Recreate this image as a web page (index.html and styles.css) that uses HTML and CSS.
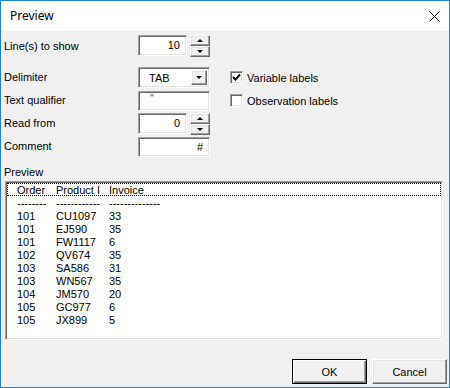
FILE: index.html
```html
<!DOCTYPE html>
<html lang="en">
<head>
    <meta charset="UTF-8">
    <title>Preview</title>
    <link rel="stylesheet" href="styles.css">
</head>
<body>
    <div class="window">
        <div class="titlebar">
            <span class="title">Preview</span>
            <svg class="close" width="11" height="11" viewBox="0 0 11 11">
                <path d="M0.5 0.5 L10.5 10.5 M10.5 0.5 L0.5 10.5" stroke="#000" stroke-width="1" fill="none"/>
            </svg>
        </div>
        <div class="content">
            <div class="field-row top-row">
                <span class="label">Line(s) to show</span>
                <div class="spin">
                    <div class="edit num">10</div>
                    <div class="spin-btns">
                        <span class="spin-btn"><i class="arrow-up"></i></span>
                        <span class="spin-btn"><i class="arrow-down"></i></span>
                    </div>
                </div>
            </div>

            <div class="fields">
                <div class="field-row">
                    <span class="label">Delimiter</span>
                    <div class="combo">
                        <span class="combo-text">TAB</span>
                        <span class="combo-btn"><i class="arrow-down"></i></span>
                    </div>
                    <label class="check">
                        <span class="box">
                            <svg width="11" height="11" viewBox="0 0 11 11"><path d="M2 5 L4.5 7.5 L9 2.5" stroke="#000" stroke-width="2" fill="none"/></svg>
                        </span>
                        Variable labels
                    </label>
                </div>
                <div class="field-row">
                    <span class="label">Text qualifier</span>
                    <div class="edit wide"><span class="quote">"</span></div>
                    <label class="check">
                        <span class="box"></span>
                        Observation labels
                    </label>
                </div>
                <div class="field-row">
                    <span class="label">Read from</span>
                    <div class="spin">
                        <div class="edit num">0</div>
                        <div class="spin-btns">
                            <span class="spin-btn"><i class="arrow-up"></i></span>
                            <span class="spin-btn"><i class="arrow-down"></i></span>
                        </div>
                    </div>
                </div>
                <div class="field-row">
                    <span class="label">Comment</span>
                    <div class="edit wide num">#</div>
                </div>
            </div>

            <div class="section-label">Preview</div>
            <div class="listbox">
                <div class="list-row header"><span>Order</span><span>Product I</span><span>Invoice</span></div>
                <div class="list-row"><span>--------</span><span>------------</span><span>--------------</span></div>
                <div class="list-row"><span>101</span><span>CU1097</span><span>33</span></div>
                <div class="list-row"><span>101</span><span>EJ590</span><span>35</span></div>
                <div class="list-row"><span>101</span><span>FW1117</span><span>6</span></div>
                <div class="list-row"><span>102</span><span>QV674</span><span>35</span></div>
                <div class="list-row"><span>103</span><span>SA586</span><span>31</span></div>
                <div class="list-row"><span>103</span><span>WN567</span><span>35</span></div>
                <div class="list-row"><span>104</span><span>JM570</span><span>20</span></div>
                <div class="list-row"><span>105</span><span>GC977</span><span>6</span></div>
                <div class="list-row"><span>105</span><span>JX899</span><span>5</span></div>
            </div>

            <div class="buttons">
                <button class="btn default">OK</button>
                <button class="btn">Cancel</button>
            </div>
        </div>
    </div>
</body>
</html>
```

FILE: styles.css
```css
body {
    margin: 0;
    font-family: "Liberation Sans", Arial, sans-serif;
    font-size: 11px;
    color: #000;
    background: #fff;
}
.window {
    width: 450px;
    height: 388px;
    box-sizing: border-box;
    border: 1px solid #1883d7;
    display: flex;
    flex-direction: column;
}
.titlebar {
    height: 30px;
    background: #fff;
    display: flex;
    align-items: center;
    justify-content: space-between;
    padding: 0 9px 0 9px;
}
.title {
    font-family: "Noto Sans", "Liberation Sans", sans-serif;
    font-size: 12px;
    margin-top: -1px;
}
.close {
    display: block;
}
.content {
    flex: 1;
    background: #f0f0f0;
    padding: 0 2px 0 3px;
}

/* form rows */
.field-row {
    display: grid;
    grid-template-columns: 134px 92px auto;
    align-items: center;
    height: 23px;
}
.top-row {
    margin-top: 3px;
    height: 24px;
}
.fields {
    margin-top: 8px;
}
.label {
    line-height: 13px;
}

/* sunken edit box */
.edit {
    box-sizing: border-box;
    height: 21px;
    width: 49px;
    background: #fff;
    border: 1px solid;
    border-color: #a0a0a0 #fff #fff #a0a0a0;
    box-shadow: inset 1px 1px #696969, inset -1px -1px #e3e3e3;
    padding: 0 6px;
    line-height: 19px;
}
.edit.wide {
    width: 72px;
    height: 20px;
    line-height: 18px;
}
.edit.num {
    text-align: right;
}
.quote {
    color: #1060c8;
    margin-left: 5px;
    font-size: 10px;
    vertical-align: top;
    line-height: 14px;
}

.spin {
    display: flex;
    gap: 3px;
}
.spin-btns {
    display: flex;
    flex-direction: column;
    width: 20px;
}
.spin-btn {
    box-sizing: border-box;
    height: 11px;
    background: #f0f0f0;
    border: 1px solid;
    border-color: #fff #696969 #696969 #fff;
    box-shadow: inset -1px -1px #a0a0a0, inset 1px 1px #e3e3e3;
    display: flex;
    align-items: center;
    justify-content: center;
}
.arrow-up {
    width: 0;
    height: 0;
    border-left: 3px solid transparent;
    border-right: 3px solid transparent;
    border-bottom: 3px solid #000;
}
.arrow-down {
    width: 0;
    height: 0;
    border-left: 3px solid transparent;
    border-right: 3px solid transparent;
    border-top: 3px solid #000;
}

.combo {
    box-sizing: border-box;
    width: 72px;
    height: 21px;
    background: #fff;
    border: 1px solid;
    border-color: #a0a0a0 #fff #fff #a0a0a0;
    box-shadow: inset 1px 1px #696969, inset -1px -1px #e3e3e3;
    display: flex;
    align-items: center;
    justify-content: space-between;
    padding: 2px 2px 2px 10px;
}
.combo-btn {
    box-sizing: border-box;
    width: 16px;
    height: 15px;
    background: #f0f0f0;
    border: 1px solid;
    border-color: #fff #696969 #696969 #fff;
    box-shadow: inset -1px -1px #a0a0a0, inset 1px 1px #e3e3e3;
    display: flex;
    align-items: center;
    justify-content: center;
}

.check {
    display: flex;
    align-items: center;
    gap: 4px;
}
.box {
    box-sizing: border-box;
    width: 13px;
    height: 13px;
    background: #fff;
    border: 1px solid;
    border-color: #a0a0a0 #fff #fff #a0a0a0;
    box-shadow: inset 1px 1px #696969, inset -1px -1px #e3e3e3;
    display: flex;
    align-items: center;
    justify-content: center;
}
.box svg {
    display: block;
}

/* preview list */
.section-label {
    margin-top: 8px;
    line-height: 13px;
}
.listbox {
    box-sizing: border-box;
    margin: 2px 4px 0 1px;
    height: 159px;
    background: #fff;
    border: 1px solid;
    border-color: #a0a0a0 #fff #fff #a0a0a0;
    box-shadow: inset 1px 1px #696969, inset -1px -1px #e3e3e3;
    padding: 1px;
}
.list-row {
    display: grid;
    grid-template-columns: 39px 53px auto;
    padding: 1px 0 0 10px;
    height: 12px;
    line-height: 13px;
    white-space: nowrap;
}
.list-row.header {
    outline: 1px dotted #000;
    outline-offset: -1px;
}

/* buttons */
.buttons {
    display: flex;
    justify-content: flex-end;
    gap: 5px;
    margin-top: 19px;
}
.btn {
    box-sizing: border-box;
    width: 75px;
    height: 25px;
    font-family: "Liberation Sans", Arial, sans-serif;
    font-size: 11px;
    color: #000;
    background: #f0f0f0;
    border: 1px solid;
    border-color: #fff #696969 #696969 #fff;
    box-shadow: inset -1px -1px #a0a0a0, inset 1px 1px #e3e3e3;
    padding: 0;
}
.btn.default {
    border: 1px solid #000;
    box-shadow: inset 1px 1px #fff, inset -1px -1px #696969, inset -2px -2px #a0a0a0;
}
```
